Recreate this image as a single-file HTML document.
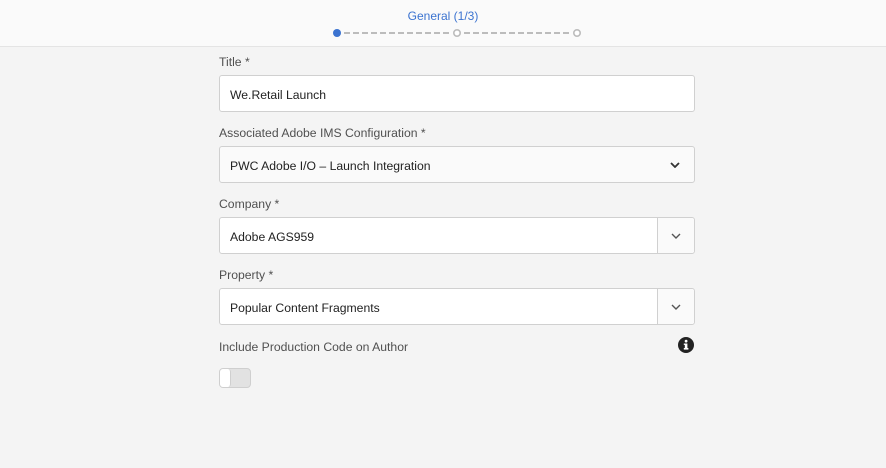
<!DOCTYPE html>
<html><head><style>
body{margin:0;width:886px;height:468px;background:#f4f4f4;font-family:"Liberation Sans",sans-serif;position:relative;overflow:hidden}
.hdr{position:absolute;left:0;top:0;width:886px;height:46px;background:#fafafa;border-bottom:1px solid #e4e4e4}
.step{position:absolute;top:9px;left:0;width:886px;text-align:center;font-size:12px;color:#3b73d0}
.lbl{position:absolute;left:219px;font-size:12.2px;color:#505050}
.box{position:absolute;left:219px;width:474px;height:35px;border:1px solid #d0d0d0;border-radius:3px;background:#fff;box-sizing:content-box}
.box span{position:absolute;left:10px;top:12px;font-size:12.2px;color:#222}
.btn{position:absolute;right:0;top:0;width:36px;height:35px;border-left:1px solid #d0d0d0;background:#fafafa;border-radius:0 3px 3px 0}
.chev{position:absolute;width:10px;height:6px}
</style></head><body>
<div class="hdr">
<div class="step">General (1/3)</div>
<svg style="position:absolute;left:330px;top:26px" width="256" height="14">
<circle cx="7" cy="7" r="4" fill="#3b73d0"/>
<line x1="14" y1="7" x2="121" y2="7" stroke="#bcbcbc" stroke-width="2" stroke-dasharray="6,3"/>
<circle cx="127" cy="7" r="3.2" fill="#fff" stroke="#bcbcbc" stroke-width="1.6"/>
<line x1="134" y1="7" x2="241" y2="7" stroke="#bcbcbc" stroke-width="2" stroke-dasharray="6,3"/>
<circle cx="247" cy="7" r="3.2" fill="#fff" stroke="#bcbcbc" stroke-width="1.6"/>
</svg>
</div>
<div class="lbl" style="top:55px">Title *</div>
<div class="box" style="top:75px"><span>We.Retail Launch</span></div>
<div class="lbl" style="top:126px">Associated Adobe IMS Configuration *</div>
<div class="box" style="top:146px;background:#fafafa"><span>PWC Adobe I/O – Launch Integration</span>
<svg class="chev" style="left:450px;top:15px" viewBox="0 0 10 6"><path d="M1 1L5 5L9 1" fill="none" stroke="#333" stroke-width="1.8"/></svg></div>
<div class="lbl" style="top:197px">Company *</div>
<div class="box" style="top:217px"><span>Adobe AGS959</span><div class="btn">
<svg class="chev" style="left:13px;top:15px" viewBox="0 0 10 6"><path d="M1 1L5 5L9 1" fill="none" stroke="#555" stroke-width="1.4"/></svg></div></div>
<div class="lbl" style="top:268px">Property *</div>
<div class="box" style="top:288px"><span>Popular Content Fragments</span><div class="btn">
<svg class="chev" style="left:13px;top:15px" viewBox="0 0 10 6"><path d="M1 1L5 5L9 1" fill="none" stroke="#555" stroke-width="1.4"/></svg></div></div>
<div class="lbl" style="top:340px">Include Production Code on Author</div>
<svg style="position:absolute;left:678px;top:337px" width="16" height="16" viewBox="0 0 16 16"><circle cx="8" cy="8" r="8" fill="#222"/><rect x="6.8" y="6.5" width="2.6" height="6" fill="#fff"/><rect x="5.8" y="11" width="4.6" height="1.6" fill="#fff"/><rect x="5.8" y="6.5" width="2" height="1.4" fill="#fff"/><circle cx="8.1" cy="4.1" r="1.4" fill="#fff"/></svg>
<div style="position:absolute;left:219px;top:368px;width:30px;height:18px;border:1px solid #cfcfcf;border-radius:4px;background:#e2e2e2"></div>
<div style="position:absolute;left:220px;top:369px;width:10px;height:18px;border-radius:3px;background:#fff;border-right:1px solid #cfcfcf"></div>
</body></html>
